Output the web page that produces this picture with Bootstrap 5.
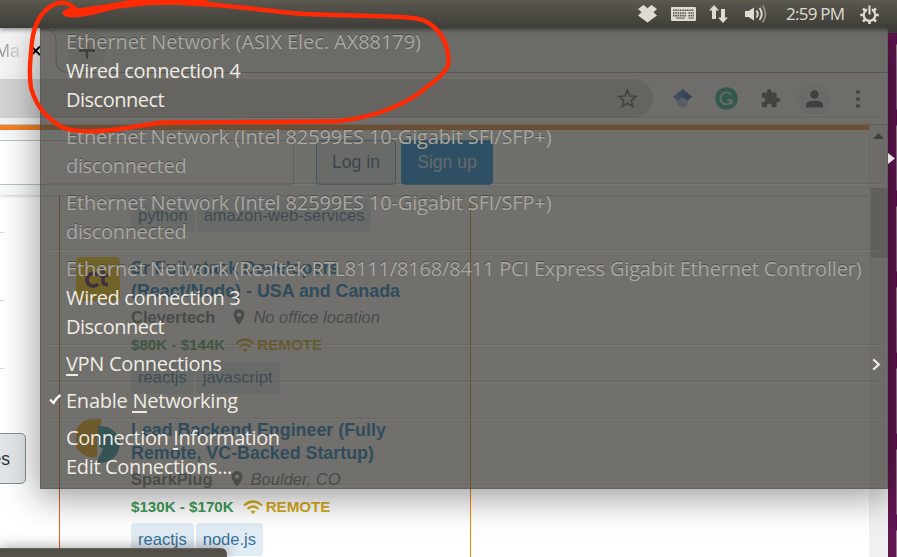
<!doctype html>
<html lang="en">
<head>
<meta charset="utf-8">
<title>Network menu</title>
<link rel="stylesheet" href="https://cdn.jsdelivr.net/npm/bootstrap@5.3.0/dist/css/bootstrap.min.css">
<style>
body{width:897px;height:557px;overflow:hidden;font-family:"Liberation Sans",sans-serif;background:#611650;position:relative}
svg{display:block;flex:none}
/* top panel */
.panel{position:absolute;left:0;top:0;width:897px;height:28px;background:linear-gradient(#5e5b4e 0,#57554c 3px,#3f3e39 27px,#3b3a36);color:#dfdbd2;z-index:3;padding:0 18px 0 638px;box-shadow:0 2px 4px rgba(0,0,0,.4)}
.panel-edge{position:absolute;left:888px;top:28px;width:9px;height:5px;background:#3c3b37;z-index:3}
.clock{font:17px/28px "Open Sans",sans-serif;letter-spacing:-.75px;width:61px;white-space:nowrap;margin-left:18px;margin-right:14px}
/* browser window */
.browser{position:absolute;left:0;top:28px;width:888px;height:529px;background:#fff}
.tabs{height:45px;background:#e9eaeb}
.tab-now{width:66px;background:#f4f4f4;padding-top:12px;font-size:18px;line-height:22px}
.tab-title{width:29px;color:transparent;background:linear-gradient(90deg,#777 0,#bbb 55%,#eee);-webkit-background-clip:text;background-clip:text;margin-left:-5px}
.tools{height:52px;background:#f1f2f2;border-bottom:1px solid #c9c9c9;padding-right:22px}
.omni{width:653px;height:39px;background:#d2d2d2;border-radius:0 20px 20px 0;padding-right:15px}
.avatar{width:32px;height:32px;border-radius:50%;background:#e6e8ec}
.site{width:869px;border-top:5px solid #f48024}
.head{height:65px;background:#f8f9f9;padding-top:10px;box-shadow:0 1px 3px rgba(0,0,0,.2);position:relative}
.find{width:294px;height:45px;border:1px solid #b9bfc4;border-left:0;border-radius:0 4px 4px 0;background:#fff;margin-right:22px}
.hbtn{height:45px;border:1px solid #0a84d8;border-radius:4px;font-size:17.6px;padding:0;line-height:43px}
.hb-in{width:80px;background:#e1ecf4;color:#2c5f87;border-color:#5b9ac8}
.hb-up{width:92px;background:#0083e0;color:#d5e5f2;margin-left:5px}
.side{width:60px;border-right:1px solid #d4622c;overflow:hidden;padding-top:37px}
.tick{width:4px;height:1px;background:#dcdcdc;margin-bottom:67px}
.more{margin:-3px 0 0 -30px;width:56px;height:51px;border:1px solid #848d95;border-radius:5px;background:#e3e6e8;font-size:17.5px;line-height:50px;padding-right:15px;color:#2f3337}
.jobs{width:411px;border-right:1px solid #f48a00;padding:4px 0 0 16px}
.job{height:162px}
.jlogo{width:44px;margin-right:11px}
.jt{font-weight:700;font-size:17.85px;line-height:23px;color:#0073c4;white-space:nowrap;height:46px}
.co{height:28px;font-size:16.5px;color:#6a737c;white-space:nowrap}
.pay{height:28px;font-size:15.15px;font-weight:700;color:#3d9a57;white-space:nowrap}
.remote{color:#d6ab1b}
.tags{gap:2px;padding-top:2px}
.tg{height:33px;border-radius:4px;background:#e1ecf4;color:#39739d;font-size:16.55px;line-height:33px;padding:0 7px;white-space:nowrap}
.bar{width:19px;background:#f0f0f0;padding-top:8px}
.thumb{width:17px;height:70px;background:#bdbdbd;margin:49px 0 0 2px}
/* indicator menu */
.netmenu{position:absolute;left:40px;top:28px;width:848px;height:461px;background:rgba(64,62,56,.74);border:1px solid rgba(80,80,74,.4);border-top:0;z-index:2;box-shadow:0 6px 34px 2px rgba(0,0,0,.4);color:#efebe3;font:20px/29px "Open Sans","Noto Sans",sans-serif}
.mi{height:29px;padding-left:25px;line-height:28px;white-space:nowrap;position:relative}
.off{color:#a9a7a2;text-shadow:0 -1px 0 rgba(70,69,65,.8)}
.rule{height:8px;padding:2px 5px 0}
.rule::before{content:"";display:block;height:2px;background:linear-gradient(rgba(60,60,56,.16) 50%,rgba(255,255,255,.05) 50%)}
.mi u{text-decoration:none;border-bottom:2px solid #efebe3;display:inline-block;height:26px;line-height:28px;vertical-align:top}
.w0{letter-spacing:-.06px}.w1{letter-spacing:-.34px}.w2{letter-spacing:-.5px}.w3{letter-spacing:-.14px}.w4{letter-spacing:-.18px}.w5{letter-spacing:-.32px}.w6{letter-spacing:-.25px}.w7{letter-spacing:-.4px}
.over{position:absolute;z-index:4}
.under-win{position:absolute;left:0;top:548px;width:227px;height:9px;background:linear-gradient(#68665c,#4f4d46 2px,#58564e);border-radius:0 6px 0 0;z-index:1;box-shadow:0 0 14px rgba(0,0,0,.45)}
.launch{position:absolute;left:896px;top:33px;width:1px;height:524px;background:repeating-linear-gradient(#5d1250 0,#5d1250 11px,#a98aa2 12px,#8c6285 76px,#5d1250 77px,#5d1250 81px)}
</style>
<script src="https://cdn.jsdelivr.net/npm/bootstrap@5.3.0/dist/js/bootstrap.bundle.min.js"></script>
</head>
<body>
<svg class="d-none"><defs>
<symbol id="pin" viewBox="0 0 14 18"><path fill-rule="evenodd" d="M7 1a5.600 5.600 0 0 0-5.600 5.600C1.400 10.500 7 17 7 17s5.600-6.500 5.600-10.400A5.600 5.600 0 0 0 7 1zm0 3.400a2.200 2.200 0 1 1 0 4.400 2.200 2.200 0 0 1 0-4.400z" fill="#6a737c"/></symbol>
<symbol id="wifi" viewBox="0 0 20 15"><path d="M1 5.500Q10-2.500 19 5.500M4.500 9Q10 4 15.500 9" fill="none" stroke="#d6ab1b" stroke-width="2.300"/><path d="M7.500 11.500Q10 9.500 12.500 11.500L10 14.300z" fill="#d6ab1b"/></symbol>
</defs></svg>

<div class="browser">
  <div class="tabs d-flex position-relative">
    <div class="tab-now d-flex"><span class="tab-title">Ma</span>
      <svg style="margin-left:6px" width="11" height="22" viewBox="0 0 11 22"><path d="M1.500 6.500l8.500 8.500M10 6.500l-8.500 8.500" stroke="#000" stroke-width="2"/></svg></div>
    <svg class="position-absolute" style="left:41px;top:0" width="847" height="45" viewBox="0 0 847 45"><path d="M0 .5Q15 .5 15 12V32Q15 45 27 45H847V0H0z" fill="#e9eaeb"/><path d="M0 .5Q15 .5 15 12V32Q15 44.500 27 44.500H847" fill="none" stroke="#9a9a9a"/><circle cx="46" cy="22" r="19" fill="#d9dadb"/><path d="M46 14.500v16M38 22.500h16" stroke="#3d4043" stroke-width="2.400"/></svg>
  </div>
  <div class="tools d-flex align-items-center">
    <div class="omni d-flex align-items-center justify-content-end"><svg width="21" height="21" viewBox="0 0 21 21"><path d="M10.500 2.300l2.400 5.700 6.100.5-4.700 4 1.500 6-5.300-3.200-5.300 3.200 1.500-6-4.700-4 6.100-.5z" fill="none" stroke="#4d5155" stroke-width="1.700"/></svg></div>
    <svg style="margin-left:20px" width="19" height="19" viewBox="0 0 19 19"><circle cx="9.500" cy="13" r="5.600" fill="#a0b8e8"/><path d="M0 7.800L9.500 0 19 7.800 14.500 11.500Q9.500 6 4.500 11.500z" fill="#3f74d8"/><path d="M9.500 0L19 7.800 14.500 11.500 9.500 8z" fill="#2a56a8"/></svg>
    <svg style="margin-left:23px" width="23" height="23" viewBox="0 0 23 23"><circle cx="11.500" cy="11.500" r="11.300" fill="#11a683"/><path d="M16 7.500A6 6 0 1 0 16.800 14M12.500 13.300h4.300v4" fill="none" stroke="#d3eee7" stroke-width="1.900"/></svg>
    <svg style="margin-left:22px" width="21" height="21" viewBox="0 0 24 24"><path d="M20.500 11H19V7a2 2 0 0 0-2-2h-4V3.500a2.500 2.500 0 0 0-5 0V5H4a2 2 0 0 0-2 2v3.800h1.500a2.700 2.700 0 0 1 0 5.400H2V20a2 2 0 0 0 2 2h3.800v-1.500a2.700 2.700 0 0 1 5.400 0V22H17a2 2 0 0 0 2-2v-4h1.500a2.500 2.500 0 0 0 0-5z" fill="#4d5155"/></svg>
    <div class="avatar d-flex align-items-center justify-content-center" style="margin-left:17px"><svg width="17" height="18" viewBox="0 0 17 18"><circle cx="8.500" cy="4.500" r="4.300" fill="#434a53"/><path d="M0 17.500V15Q0 10.800 8.500 10.800T17 15v2.500z" fill="#434a53"/></svg></div>
    <svg style="margin-left:25px" width="6" height="20" viewBox="0 0 6 20"><circle cx="3" cy="3" r="2.100" fill="#4d5155"/><circle cx="3" cy="10" r="2.100" fill="#4d5155"/><circle cx="3" cy="17" r="2.100" fill="#4d5155"/></svg>
  </div>
  <div class="d-flex">
    <div class="site">
      <div class="head d-flex"><div class="find"></div><div class="btn hbtn hb-in">Log in</div><div class="btn hbtn hb-up">Sign up</div></div>
      <div class="d-flex">
        <div class="side"><div class="tick"></div><div class="tick"></div><div class="tick"></div><div class="more text-end">es</div></div>
        <div class="jobs">
          <div class="d-flex tags" style="margin:-2px 0 25px 55px"><span class="tg">python</span><span class="tg">amazon-web-services</span></div>
          <div class="job d-flex">
            <svg class="jlogo" width="44" height="44" viewBox="0 0 44 44"><rect width="44" height="44" rx="5" fill="#ffc700"/><path d="M22 18.500A6.400 6.400 0 1 0 22 27M27 13v11.500q0 3.500 5 3M23 18.500h9" fill="none" stroke="#3a1446" stroke-width="3.700"/></svg>
            <div><div class="jt">Sr Full-stack Developers<br>(React/Node) - USA and Canada</div>
              <div class="co d-flex align-items-center"><b>Clevertech</b><svg style="margin:0 7px 0 17px" width="14" height="18"><use href="#pin"/></svg><i>No office location</i></div>
              <div class="pay d-flex align-items-center"><span>$80K - $144K</span><svg style="margin:0 2px 0 10px" width="20" height="15"><use href="#wifi"/></svg><span class="remote">REMOTE</span></div>
              <div class="tags d-flex"><span class="tg">reactjs</span><span class="tg">javascript</span></div></div>
          </div>
          <div class="job d-flex">
            <svg class="jlogo" width="44" height="44" viewBox="0 0 44 44"><path d="M26 0H14A19 19 0 0 0 21 38V18z" fill="#f0a500"/><path d="M22 7C50 5 52 44 22 44H20L27 30Q22 28 22 22z" fill="#1898a5"/></svg>
            <div><div class="jt">Lead Backend Engineer (Fully<br>Remote, VC-Backed Startup)</div>
              <div class="co d-flex align-items-center"><b>SparkPlug</b><svg style="margin:0 7px 0 17px" width="14" height="18"><use href="#pin"/></svg><i>Boulder, CO</i></div>
              <div class="pay d-flex align-items-center"><span>$130K - $170K</span><svg style="margin:0 3px 0 9px" width="20" height="15"><use href="#wifi"/></svg><span class="remote">REMOTE</span></div>
              <div class="tags d-flex"><span class="tg">reactjs</span><span class="tg">node.js</span></div></div>
          </div>
        </div>
      </div>
    </div>
    <div class="bar"><svg class="ms-1" width="11" height="6" viewBox="0 0 11 6"><path d="M0 6L5.500 0 11 6z" fill="#444"/></svg><div class="thumb"></div></div>
  </div>
</div>
<div class="under-win"></div>
<div class="launch"></div>
<svg class="over" style="left:888px;top:153px" width="7" height="11" viewBox="0 0 7 11"><path d="M0 0L7 5.500 0 11z" fill="#e8e4e6"/></svg>

<div class="netmenu">
  <div class="mi off w0">Ethernet Network (ASIX Elec. AX88179)</div>
  <div class="mi w1">Wired connection 4</div>
  <div class="mi w2">Disconnect</div>
  <div class="rule"></div>
  <div class="mi off w3">Ethernet Network (Intel 82599ES 10-Gigabit SFI/SFP+)</div>
  <div class="mi off w1">disconnected</div>
  <div class="rule"></div>
  <div class="mi off w3">Ethernet Network (Intel 82599ES 10-Gigabit SFI/SFP+)</div>
  <div class="mi off w1">disconnected</div>
  <div class="rule"></div>
  <div class="mi off w4">Ethernet Network (Realtek RTL8111/8168/8411 PCI Express Gigabit Ethernet Controller)</div>
  <div class="mi w1">Wired connection 3</div>
  <div class="mi w2">Disconnect</div>
  <div class="rule"></div>
  <div class="mi w5 d-flex justify-content-between align-items-start"><span><u>V</u>PN Connections</span><svg class="mt-2" style="margin-right:5px" width="11" height="13" viewBox="0 0 11 14"><path d="M2 1.500L8 7l-6 5.500" fill="none" stroke="#efebe3" stroke-width="2.300"/></svg></div>
  <div class="rule"></div>
  <div class="mi w6"><svg class="position-absolute" style="left:8px;top:7px" width="13" height="11" viewBox="0 0 13 11"><path d="M1 5.500L4.500 9Q7 4 11.500 1" fill="none" stroke="#fff" stroke-width="2.200"/></svg>Enable <u>N</u>etworking</div>
  <div class="rule"></div>
  <div class="mi w7">Connection <u>I</u>nformation</div>
  <div class="mi w1">Edit Connections...</div>
  <div class="rule"></div>
</div>

<div class="panel d-flex align-items-center">
  <svg width="19" height="18" viewBox="0 0 19 18"><path d="M5.500 0L9.500 3.200 13.500 0 19 4 15.500 7.200 19 10.500 9.500 17.500 0 10.500 3.500 7.200 0 4z" fill="#dfdbd2"/></svg>
  <svg style="margin-left:14px" width="25" height="14" viewBox="0 0 25 14"><rect width="25" height="14" rx="1" fill="#dfdbd2"/><path d="M2 3.200h21M2 6h13.500M17.500 6H23M2 8.600h13.500M17.500 8.600H23" stroke="#55534b" stroke-width="1.600" stroke-dasharray="1.600 .7"/><path d="M5 11.200h9M17.500 11.200H23" stroke="#77756d" stroke-width="1.300"/></svg>
  <svg style="margin-left:13px" width="19" height="18" viewBox="0 0 19 18"><path d="M5 0l5 5.500H7V14H3V5.500H0zM14 18l-5-5.500h3V4h4v8.500h3z" fill="#dfdbd2"/></svg>
  <svg style="margin-left:17px" width="23" height="20" viewBox="0 0 23 20"><path d="M0 7h3.500L9 3.500v13L3.500 13H0z" fill="#dfdbd2"/><path d="M11.500 6.500q2.500 3.500 0 7M14.500 4q4.500 6 0 12" fill="none" stroke="#dfdbd2" stroke-width="1.900"/><path d="M17.500 1.500q6 8.500 0 17" fill="none" stroke="#98958b" stroke-width="1.700"/></svg>
  <span class="clock">2:59 PM</span>
  <svg width="19" height="19" viewBox="0 0 19 19"><circle cx="9.500" cy="10" r="5.800" fill="none" stroke="#dfdbd2" stroke-width="2.200"/><path d="M9.500 16v3M3.500 10H.2M15.500 10h3.300M5.200 5.700L3 3.500M13.800 5.700L16 3.500M5.200 14.300L3 16.500M13.800 14.300L16 16.500" stroke="#dfdbd2" stroke-width="2.600"/><path d="M9.500 2v6" stroke="#4f4e46" stroke-width="4.600"/><path d="M9.500 .5V9.500" stroke="#dfdbd2" stroke-width="2.100"/></svg>
</div>
<div class="panel-edge"></div>

<svg class="over" style="left:0;top:0" width="460" height="140" viewBox="0 0 460 140"><path d="M75 9C68 1 60 2 53 5C40 12 34 24 32 42C30 62 29 74 31 88C36 106 48 120 64 128C78 133 98 132 120 129C138 127 150 123 165 122.500C240 122 300 122 340 121C375 117 400 106 418 94C435 81 446 73 448.500 64C449 48 444 36 434 27C427 20 419 18 408 17.500C380 15 330 16 297 13.500C260 10 220 4 190 3.500C165 1 130 3 108 7L76 13" fill="none" stroke="#ff2a04" stroke-width="4.400" stroke-linejoin="round"/><path d="M62 13C64 8 72 7 80 8L108 4 130 0H205L215 4 150 5 115 9Q86 17 75 17.500 64 18 62 13z" fill="#ff2a04"/></svg>
</body>
</html>
